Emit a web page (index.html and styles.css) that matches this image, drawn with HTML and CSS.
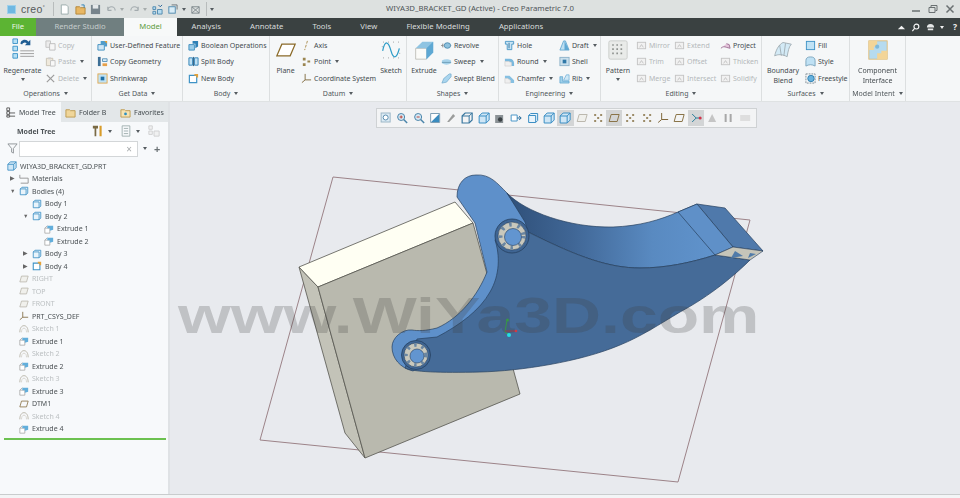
FILE: index.html
```html
<!DOCTYPE html>
<html lang="en">
<head>
<meta charset="utf-8">
<title>WIYA3D_BRACKET_GD (Active) - Creo Parametric 7.0</title>
<link rel="stylesheet" href="styles.css">
</head>
<body>
<svg class="defs" width="0" height="0" aria-hidden="true">
  <defs>
    <symbol id="i-cube" viewBox="0 0 12 12"><path d="M1 4l3-3h7v7l-3 3H1z" fill="#cfe6f5" stroke="#3c8fc4"/><path d="M1 4h7v7M8 4l3-3" fill="none" stroke="#3c8fc4"/></symbol>
    <symbol id="i-body" viewBox="0 0 12 12"><path d="M1.500 3.500l2-2h7v7l-2 2h-7z" fill="#e9f4fb" stroke="#3c8fc4"/><path d="M1.500 3.500h7v7" fill="none" stroke="#3c8fc4"/></symbol>
    <symbol id="i-ext" viewBox="0 0 12 12"><path d="M1 5h6v6H1z" fill="#fff" stroke="#a9a9a9"/><path d="M4 2h7v5l-4 1V5H4z" fill="#62aedb"/><path d="M1 5l3-3" stroke="#a9a9a9"/></symbol>
    <symbol id="i-sketch" viewBox="0 0 12 12"><path d="M1 10c0-5 2-8 5-8s5 3 5 8" fill="none" stroke="#bdb9ad" stroke-width="1.200"/><path d="M3 10c0-3 1-5 3-5s3 2 3 5" fill="none" stroke="#d2d0c9"/></symbol>
    <symbol id="i-plane" viewBox="0 0 12 12"><path d="M3 2.500h8L9 9.500H1z" fill="none" stroke="#8a7448"/></symbol>
    <symbol id="i-plane-off" viewBox="0 0 12 12"><path d="M3 2.500h8L9 9.500H1z" fill="#f0f0ec" stroke="#bcb8ae"/></symbol>
    <symbol id="i-csys" viewBox="0 0 12 12"><path d="M4.500 1v6.500H11M4.500 7.500L1 10.500" fill="none" stroke="#80693d"/></symbol>
    <symbol id="i-copy" viewBox="0 0 12 12"><path d="M1 1h5v7H1z" fill="#ececec" stroke="#c2c2c2"/><path d="M5 4h6v7H5z" fill="#f6f6f6" stroke="#bdbdbd"/></symbol>
    <symbol id="i-paste" viewBox="0 0 12 12"><path d="M1.500 2.500h7v8h-7z" fill="#efe9dc" stroke="#c8c2b4"/><path d="M6 5h5v6H6z" fill="#f8f8f8" stroke="#c2c2c2"/><path d="M3.500 1.500h3v2h-3z" fill="#d0d0d0"/></symbol>
    <symbol id="i-udf" viewBox="0 0 12 12"><path d="M1 5h7v6H1z" fill="#cfe6f5" stroke="#3f8fc0"/><path d="M4 1h7v6H8V5H4z" fill="#4f9ccb"/><path d="M8 1l3 0v3z" fill="#e2a23c"/></symbol>
    <symbol id="i-geom" viewBox="0 0 12 12"><path d="M1 1h3v10H1z" fill="#3d6f96"/><path d="M6 3h5v3H6z" fill="#d9ecf7" stroke="#5a93b8"/><path d="M6 8h5v3H6z" fill="#e6a04a"/></symbol>
    <symbol id="i-shrink" viewBox="0 0 12 12"><rect x="1" y="1" width="10" height="10" fill="#bfe2f5" stroke="#e2a94f"/><rect x="4" y="4" width="4" height="4" fill="#1f6fa5"/></symbol>
    <symbol id="i-bool" viewBox="0 0 12 12"><path d="M1 5h6v6H1z" fill="#9ccde9" stroke="#3f8fc0"/><path d="M5 1h6v6l-3 2V4H5z" fill="#2f81b6"/></symbol>
    <symbol id="i-split" viewBox="0 0 12 12"><path d="M1 2h4v8H1zM7 2h4v8H7z" fill="#bfe0f3" stroke="#2f81b6"/><path d="M6 1v10" stroke="#2f5d80"/></symbol>
    <symbol id="i-new" viewBox="0 0 12 12"><path d="M1.500 2.500h8v8h-8z" fill="#fff" stroke="#3f93c6" stroke-width="1.300"/><path d="M7 1h4v4H9V3H7z" fill="#e5a23a"/></symbol>
    <symbol id="i-revolve" viewBox="0 0 12 12"><path d="M0 6h12" stroke="#999" stroke-dasharray="2 1"/><ellipse cx="7" cy="6" rx="3.500" ry="3" fill="#8fc2de" stroke="#4f8cb0"/><path d="M2 4v4" stroke="#777"/></symbol>
    <symbol id="i-sweep" viewBox="0 0 12 12"><path d="M1 5c3-2 7-2 10 0v3c-3 2-7 2-10 0z" fill="#a6d2ea"/><path d="M1 7h10" stroke="#6d9cb8"/></symbol>
    <symbol id="i-blend" viewBox="0 0 12 12"><path d="M1 11l2-5 6-5h2v3L6 10z" fill="#a9d5ee" stroke="#6ba6ca" stroke-width=".7"/></symbol>
    <symbol id="i-hole" viewBox="0 0 12 12"><path d="M1.500 1.500h9v3h-2v6h-5v-6h-2z" fill="#c7e3f3" stroke="#4a97c6"/><path d="M5.500 3v6" stroke="#2f6f9a"/></symbol>
    <symbol id="i-round" viewBox="0 0 12 12"><path d="M1 3h5c3 0 5 2 5 5v3H8V7L5 6H1z" fill="#79b8dd"/><path d="M1 6h4l3 1v4H1z" fill="#efefef" stroke="#c8c8c8" stroke-width=".6"/></symbol>
    <symbol id="i-chamfer" viewBox="0 0 12 12"><path d="M1 3h5l5 5v3H7V8L4 6H1z" fill="#86c0e2"/><path d="M1 6h3l3 2v3H1z" fill="#efefef" stroke="#c8c8c8" stroke-width=".6"/></symbol>
    <symbol id="i-draft" viewBox="0 0 12 12"><path d="M1 11L5 1h2l4 10z" fill="#bcdff2" stroke="#4f9ccb" stroke-width=".8"/><path d="M6 1v10h5z" fill="#5fa8d3"/></symbol>
    <symbol id="i-shell" viewBox="0 0 12 12"><rect x="1" y="1.500" width="10" height="9" fill="#c9dfec" stroke="#8cb2c9"/><rect x="4" y="4" width="4" height="4" fill="#2f78a8"/></symbol>
    <symbol id="i-rib" viewBox="0 0 12 12"><path d="M1 4h3v5h7v2H1z" fill="#9fd0ea" stroke="#4f9ccb" stroke-width=".7"/><path d="M5 8l3-6h3v6z" fill="#cfe8f6" stroke="#5fa8d3" stroke-width=".7"/></symbol>
    <symbol id="i-style" viewBox="0 0 12 12"><path d="M1 11V5c0-3 2-4 5-4s5 1 5 4v6c-3-2-7-2-10 0z" fill="#bfe1f4" stroke="#7ba4bd"/></symbol>
    <symbol id="i-free" viewBox="0 0 12 12"><rect x="1" y="1" width="10" height="10" fill="none" stroke="#7c8a92" stroke-dasharray="2 1"/><circle cx="6.500" cy="6" r="3.500" fill="#67b2de" stroke="#2f7fb0"/></symbol>
    <symbol id="i-extrude" viewBox="0 0 24 24"><path d="M2 10h13v13H2z" fill="#fbfbf8" stroke="#b9b9b2"/><path d="M2 10l8-8h13v13l-8 8V10z" fill="#8fc4e2"/><path d="M15 10l8-8v13l-8 8z" fill="#5ea8d3"/></symbol>
    <symbol id="i-surface" viewBox="0 0 24 24"><path d="M2 19C4 10 8 5 12 3l10 2c-3 3-4 9-5 15C11 17 6 17 2 19z" fill="#d3eaf6" stroke="#9ba7ad"/><path d="M8 6l2 13M15 4l-2 15" stroke="#9ba7ad" fill="none"/></symbol>
    <symbol id="i-interface" viewBox="0 0 24 24"><rect x="1" y="1" width="22" height="22" fill="#b6dbef" stroke="#e0b76a"/><path d="M1 12h6V8h4V1H1zM11 23v-7h5v-3h7v10z" fill="#f3d598"/><circle cx="11" cy="8" r="2.500" fill="#7fb9da"/></symbol>
    <symbol id="i-regen" viewBox="0 0 24 24"><path d="M1 1h5v5H1zM1 9h5v5H1zM1 17h5v5H1z" fill="#b6e0f5" stroke="#3b93c8"/><path d="M9 6a5 5 0 0 1 9-2l2-2v6h-6l2-2a3 3 0 0 0-5 1z" fill="#1f5d93"/><path d="M9 14h15M9 17h15M9 20h15" stroke="#999"/></symbol>
    <symbol id="i-pattern" viewBox="0 0 24 24"><rect x="1" y="1" width="22" height="22" rx="2" fill="#e9ebe9" stroke="#c6c9c6"/><path d="M5 6h2M10 6h2M15 6h2M5 11h2M10 11h2M15 11h2M5 16h2M10 16h2M15 16h2" stroke="#8f9390" stroke-width="2"/></symbol>
    <symbol id="i-sk" viewBox="0 0 24 24"><path d="M2 13c3-14 7-11 10 0s7 9 10-3" fill="none" stroke="#2d9cc8" stroke-width="1.500"/><path d="M3 2v1M9 2v1M15 2v1M21 2v1M3 21v1M9 21v1M15 21v1M21 21v1M1 8h1M22 16h1" stroke="#888"/></symbol>
    <symbol id="i-bigplane" viewBox="0 0 24 18"><path d="M7 2h16l-6 14H1z" fill="#fff" stroke="#8a6a28" stroke-width="1.500"/></symbol>
    <symbol id="i-grey" viewBox="0 0 12 12"><rect x="1.500" y="2.500" width="9" height="7" fill="#f1f1f1" stroke="#c4c4c4"/><path d="M4 8l2-3 2 3" fill="none" stroke="#c4c4c4"/></symbol>
    <symbol id="i-tbg" viewBox="0 0 12 12"><path d="M2 10l6-8 2 2-6 6z" fill="#9a9c9b"/></symbol>
    <symbol id="i-tbd" viewBox="0 0 12 12"><path d="M2 3h2M8 3h2M5 6h2M2 9h2M8 9h2" stroke="#806a3a" stroke-width="1.500"/></symbol>
    <symbol id="i-refit" viewBox="0 0 12 12"><rect x="1" y="1" width="9" height="9" fill="#dcebf4" stroke="#9db7c8"/><circle cx="5.500" cy="5.500" r="2.500" fill="#fff" stroke="#5d8fb0"/></symbol>
    <symbol id="i-zi" viewBox="0 0 12 12"><circle cx="5" cy="5" r="3.500" fill="#d5e9f5" stroke="#4d86ab"/><path d="M7.500 7.500L11 11" stroke="#4d86ab" stroke-width="1.500"/><path d="M3.500 5h3M5 3.500v3" stroke="#c0453a"/></symbol>
    <symbol id="i-zo" viewBox="0 0 12 12"><circle cx="5" cy="5" r="3.500" fill="#d5e9f5" stroke="#4d86ab"/><path d="M7.500 7.500L11 11" stroke="#4d86ab" stroke-width="1.500"/><path d="M3.500 5h3" stroke="#c0453a"/></symbol>
    <symbol id="i-repaint" viewBox="0 0 12 12"><path d="M1.500 1.500h9v9h-9z" fill="#fff" stroke="#7f9fb5"/><path d="M10 2v8H2z" fill="#3a8cbf"/></symbol>
    <symbol id="i-wire" viewBox="0 0 12 12"><path d="M1 4l3-3h7v7l-3 3H1z" fill="none" stroke="#39779f" stroke-width="1.200"/><path d="M1 4h7v7M8 4l3-3" fill="none" stroke="#39779f"/></symbol>
    <symbol id="i-cam" viewBox="0 0 12 12"><path d="M1 3h8v8H1z" fill="#8b9296"/><circle cx="6" cy="7.500" r="2.200" fill="#3a4144"/></symbol>
    <symbol id="i-sec" viewBox="0 0 12 12"><path d="M1 3h6v6H1z" fill="#fff" stroke="#4d98c9"/><path d="M7 6h4M9 4l2 2-2 2" fill="none" stroke="#2b6e9d"/></symbol>
  </defs>
</svg>

<header class="titlebar">
  <div class="logo"><span class="logo-mark"></span><span class="logo-text">creo<sup>°</sup></span></div>
  <div class="quick">
    <svg class="qi" viewBox="0 0 12 12"><path d="M2.500 1H8l2 2v8H2.500z" fill="#fff" stroke="#9aa"/></svg>
    <svg class="qi" viewBox="0 0 12 12"><path d="M1 3h4l1 1h5v7H1z" fill="#e8b763" stroke="#b38537"/><path d="M7 1h3v3" fill="none" stroke="#2a7fb5"/></svg>
    <svg class="qi" viewBox="0 0 12 12"><path d="M1 1h10v10H1z" fill="#77848c"/><path d="M3 1h6v4H3z" fill="#e4e8ea"/></svg>
    <svg class="qi dim" viewBox="0 0 12 12"><path d="M2 7a4 4 0 0 1 8 0M2 7V3M2 7h4" fill="none" stroke="#7f8a90" stroke-width="1.300"/></svg>
    <span class="caret dim"></span>
    <svg class="qi dim" viewBox="0 0 12 12"><path d="M10 7a4 4 0 0 0-8 0M10 7V3M10 7H6" fill="none" stroke="#7f8a90" stroke-width="1.300"/></svg>
    <span class="caret dim"></span>
    <svg class="qi" viewBox="0 0 12 12"><path d="M1 3h3v3H1zM1 8h3v3H1zM6 6h5v5H6z" fill="#b6dcf1" stroke="#4e88ad"/><path d="M7 1l2 2 2-2" fill="none" stroke="#1f5d93"/></svg>
    <svg class="qi" viewBox="0 0 12 12"><rect x="2" y="3" width="7" height="7" fill="#d8ecf7" stroke="#4e88ad"/><path d="M5 1h6v5" fill="none" stroke="#6b7478"/></svg>
    <span class="caret"></span>
    <svg class="qi" viewBox="0 0 12 12"><path d="M2 3h8v7H2zM2 3l8 7M10 3l-8 7" fill="none" stroke="#7d878b"/></svg>
    <span class="sep"></span>
    <span class="caret"></span>
  </div>
  <div class="title">WIYA3D_BRACKET_GD (Active) - Creo Parametric 7.0</div>
  <div class="winctl">
    <svg class="wc" viewBox="0 0 10 10"><path d="M1 7h8" stroke="#6a7072" stroke-width="1.500"/></svg>
    <svg class="wc" viewBox="0 0 10 10"><path d="M1 3.500h6v5H1zM3 3V1.500h6v5H7.500" fill="none" stroke="#6a7072"/></svg>
    <svg class="wc" viewBox="0 0 10 10"><path d="M1.500 1.500l7 7M8.500 1.500l-7 7" stroke="#6a7072" stroke-width="1.500"/></svg>
  </div>
</header>

<nav class="tabs">
  <span class="tab tab-file">File</span>
  <span class="tab tab-render">Render Studio</span>
  <span class="tab tab-active">Model</span>
  <span class="tab">Analysis</span>
  <span class="tab">Annotate</span>
  <span class="tab">Tools</span>
  <span class="tab">View</span>
  <span class="tab">Flexible Modeling</span>
  <span class="tab">Applications</span>
  <div class="tab-tools">
    <svg class="ti" viewBox="0 0 10 10"><path d="M1 7l4-4 4 4z" fill="#f3f3f3"/></svg>
    <svg class="ti" viewBox="0 0 10 10"><circle cx="6" cy="4" r="2.700" fill="none" stroke="#f3f3f3" stroke-width="1.300"/><path d="M4 6L1.500 9" stroke="#f3f3f3" stroke-width="1.300"/></svg>
    <svg class="ti" viewBox="0 0 10 10"><path d="M1 5a4 4 0 0 1 8 0zM2 6h6v2H2z" fill="#e6e8e8"/></svg>
    <span class="caret light"></span>
    <span class="help">?</span>
  </div>
</nav>

<section class="ribbon">
  <div class="group g-ops">
    <div class="gbody">
      <div class="big regen"><svg class="ic-big"><use href="#i-regen"/></svg><span>Regenerate</span><span class="caret"></span></div>
      <div class="col off">
        <div class="row"><svg class="ic12"><use href="#i-copy"/></svg>Copy</div>
        <div class="row"><svg class="ic12"><use href="#i-paste"/></svg>Paste<span class="caret"></span></div>
        <div class="row"><svg class="ic12" viewBox="0 0 12 12"><path d="M2 2l8 8M10 2l-8 8" stroke="#9c9c9c" stroke-width="1.300"/></svg>Delete<span class="caret"></span></div>
      </div>
    </div>
    <div class="glabel">Operations<span class="caret"></span></div>
  </div>
  <div class="group g-data">
    <div class="gbody">
      <div class="col">
        <div class="row"><svg class="ic12"><use href="#i-udf"/></svg>User-Defined Feature</div>
        <div class="row"><svg class="ic12"><use href="#i-geom"/></svg>Copy Geometry</div>
        <div class="row"><svg class="ic12"><use href="#i-shrink"/></svg>Shrinkwrap</div>
      </div>
    </div>
    <div class="glabel">Get Data<span class="caret"></span></div>
  </div>
  <div class="group g-body">
    <div class="gbody">
      <div class="col">
        <div class="row"><svg class="ic12"><use href="#i-bool"/></svg>Boolean Operations</div>
        <div class="row"><svg class="ic12"><use href="#i-split"/></svg>Split Body</div>
        <div class="row"><svg class="ic12"><use href="#i-new"/></svg>New Body</div>
      </div>
    </div>
    <div class="glabel">Body<span class="caret"></span></div>
  </div>
  <div class="group g-datum">
    <div class="gbody">
      <div class="big plane"><svg class="ic-big"><use href="#i-bigplane"/></svg><span>Plane</span></div>
      <div class="col">
        <div class="row"><svg class="ic12" viewBox="0 0 12 12"><path d="M7 1L4 11" stroke="#a98b4a" stroke-dasharray="3 1.500"/></svg>Axis</div>
        <div class="row"><svg class="ic12" viewBox="0 0 12 12"><path d="M2 2h3v3H2zM2 8h3v3H2zM7 5h3v2H7z" fill="#9a8550"/></svg>Point<span class="caret"></span></div>
        <div class="row"><svg class="ic12"><use href="#i-csys"/></svg>Coordinate System</div>
      </div>
      <div class="big sketch"><svg class="ic-big"><use href="#i-sk"/></svg><span>Sketch</span></div>
    </div>
    <div class="glabel">Datum<span class="caret"></span></div>
  </div>
  <div class="group g-shapes">
    <div class="gbody">
      <div class="big extrude"><svg class="ic-big"><use href="#i-extrude"/></svg><span>Extrude</span></div>
      <div class="col">
        <div class="row"><svg class="ic12"><use href="#i-revolve"/></svg>Revolve</div>
        <div class="row"><svg class="ic12"><use href="#i-sweep"/></svg>Sweep<span class="caret"></span></div>
        <div class="row"><svg class="ic12"><use href="#i-blend"/></svg>Swept Blend</div>
      </div>
    </div>
    <div class="glabel">Shapes<span class="caret"></span></div>
  </div>
  <div class="group g-eng">
    <div class="gbody">
      <div class="col eng-a">
        <div class="row"><svg class="ic12"><use href="#i-hole"/></svg>Hole</div>
        <div class="row"><svg class="ic12"><use href="#i-round"/></svg>Round<span class="caret"></span></div>
        <div class="row"><svg class="ic12"><use href="#i-chamfer"/></svg>Chamfer<span class="caret"></span></div>
      </div>
      <div class="col">
        <div class="row"><svg class="ic12"><use href="#i-draft"/></svg>Draft<span class="caret"></span></div>
        <div class="row"><svg class="ic12"><use href="#i-shell"/></svg>Shell</div>
        <div class="row"><svg class="ic12"><use href="#i-rib"/></svg>Rib<span class="caret"></span></div>
      </div>
    </div>
    <div class="glabel">Engineering<span class="caret"></span></div>
  </div>
  <div class="group g-edit">
    <div class="gbody">
      <div class="big pattern"><svg class="ic-big"><use href="#i-pattern"/></svg><span>Pattern</span><span class="caret"></span></div>
      <div class="col off edit-a">
        <div class="row"><svg class="ic12"><use href="#i-grey"/></svg>Mirror</div>
        <div class="row"><svg class="ic12"><use href="#i-grey"/></svg>Trim</div>
        <div class="row"><svg class="ic12"><use href="#i-grey"/></svg>Merge</div>
      </div>
      <div class="col off edit-b">
        <div class="row"><svg class="ic12"><use href="#i-grey"/></svg>Extend</div>
        <div class="row"><svg class="ic12"><use href="#i-grey"/></svg>Offset</div>
        <div class="row"><svg class="ic12"><use href="#i-grey"/></svg>Intersect</div>
      </div>
      <div class="col">
        <div class="row"><svg class="ic12" viewBox="0 0 12 12"><path d="M1 9c2-2 4-2 6-1l4 1-1-4-3-1" fill="#e5c6dc" stroke="#9c6f94"/></svg>Project</div>
        <div class="row off"><svg class="ic12"><use href="#i-grey"/></svg>Thicken</div>
        <div class="row off"><svg class="ic12"><use href="#i-grey"/></svg>Solidify</div>
      </div>
    </div>
    <div class="glabel">Editing<span class="caret"></span></div>
  </div>
  <div class="group g-surf">
    <div class="gbody">
      <div class="big boundary"><svg class="ic-big"><use href="#i-surface"/></svg><span>Boundary<br>Blend</span></div>
      <div class="col">
        <div class="row"><svg class="ic12" viewBox="0 0 12 12"><rect x="1.500" y="1.500" width="9" height="9" fill="#bfe2f5" stroke="#3f93c6"/></svg>Fill</div>
        <div class="row"><svg class="ic12"><use href="#i-style"/></svg>Style</div>
        <div class="row"><svg class="ic12"><use href="#i-free"/></svg>Freestyle</div>
      </div>
    </div>
    <div class="glabel">Surfaces<span class="caret"></span></div>
  </div>
  <div class="group g-intent">
    <div class="gbody">
      <div class="big iface"><svg class="ic-big"><use href="#i-interface"/></svg><span>Component<br>Interface</span></div>
    </div>
    <div class="glabel">Model Intent<span class="caret"></span></div>
  </div>
</section>

<main class="work">
  <aside class="side">
    <div class="stabs">
      <div class="stab stab-on"><svg class="ic12" viewBox="0 0 12 12"><path d="M2 1h3v3H2zM2 5h3v3H2zM2 9h3v2H2zM5 6.500h6M5 10h6" fill="none" stroke="#555"/></svg>Model Tree</div>
      <div class="stab stab-folder"><svg class="ic12" viewBox="0 0 12 12"><path d="M1 3h4l1 1h5v7H1z" fill="#f0d69a" stroke="#bd9a50"/></svg><span>Folder B</span></div>
      <div class="stab stab-fav"><svg class="ic12" viewBox="0 0 12 12"><path d="M1 3h4l1 1h5v7H1z" fill="#f6e3b3" stroke="#bd9a50"/><circle cx="6" cy="7.500" r="1.500" fill="#2b8fc0"/></svg><span>Favorites</span></div>
    </div>
    <div class="mt-head">
      <b>Model Tree</b>
      <span class="mt-tools">
        <svg class="ic14" viewBox="0 0 14 14"><path d="M1 1h6v3H5v9H3V4H1z" fill="#7a6a44"/><path d="M10 1v6M10 7v6" stroke="#d89c2a" stroke-width="2.500"/></svg><span class="caret"></span>
        <svg class="ic14" viewBox="0 0 14 14"><path d="M2.500 1h9v12h-9zM4.500 4h5M4.500 7h5M4.500 10h5" fill="none" stroke="#9aa"/></svg><span class="caret"></span>
        <svg class="ic14 mt-last" viewBox="0 0 14 14"><path d="M1 1h4v4H1zM1 7h4v4H1zM7 7h6v6H7z" fill="#eee" stroke="#bbb"/></svg>
      </span>
    </div>
    <div class="mt-filter">
      <svg class="ic12 funnel" viewBox="0 0 12 12"><path d="M1 1h10L7 6v5L5 10V6z" fill="none" stroke="#8d9396"/></svg>
      <div class="search"><span>×</span></div>
      <span class="caret"></span>
      <span class="plus">+</span>
    </div>
    <ul class="tree">
      <li class="l0"><svg class="ic10"><use href="#i-cube"/></svg>WIYA3D_BRACKET_GD.PRT</li>
      <li class="l1"><i class="arr">▶</i><svg class="ic10" viewBox="0 0 12 12"><path d="M1 1v4M1 5h10v6H2" fill="none" stroke="#8a8a8a"/></svg>Materials</li>
      <li class="l1"><i class="arr">▼</i><svg class="ic10"><use href="#i-body"/></svg>Bodies (4)</li>
      <li class="l2 noarr"><svg class="ic10"><use href="#i-body"/></svg>Body 1</li>
      <li class="l2"><i class="arr">▼</i><svg class="ic10"><use href="#i-body"/></svg>Body 2</li>
      <li class="l3"><svg class="ic10"><use href="#i-ext"/></svg>Extrude 1</li>
      <li class="l3"><svg class="ic10"><use href="#i-ext"/></svg>Extrude 2</li>
      <li class="l2"><i class="arr">▶</i><svg class="ic10"><use href="#i-body"/></svg>Body 3</li>
      <li class="l2"><i class="arr">▶</i><svg class="ic10"><use href="#i-new"/></svg>Body 4</li>
      <li class="l1 noarr dimmed"><svg class="ic10"><use href="#i-plane-off"/></svg>RIGHT</li>
      <li class="l1 noarr dimmed"><svg class="ic10"><use href="#i-plane-off"/></svg>TOP</li>
      <li class="l1 noarr dimmed"><svg class="ic10"><use href="#i-plane-off"/></svg>FRONT</li>
      <li class="l1 noarr"><svg class="ic10"><use href="#i-csys"/></svg>PRT_CSYS_DEF</li>
      <li class="l1 noarr dimmed"><svg class="ic10"><use href="#i-sketch"/></svg>Sketch 1</li>
      <li class="l1 noarr"><svg class="ic10"><use href="#i-ext"/></svg>Extrude 1</li>
      <li class="l1 noarr dimmed"><svg class="ic10"><use href="#i-sketch"/></svg>Sketch 2</li>
      <li class="l1 noarr"><svg class="ic10"><use href="#i-ext"/></svg>Extrude 2</li>
      <li class="l1 noarr dimmed"><svg class="ic10"><use href="#i-sketch"/></svg>Sketch 3</li>
      <li class="l1 noarr"><svg class="ic10"><use href="#i-ext"/></svg>Extrude 3</li>
      <li class="l1 noarr"><svg class="ic10"><use href="#i-plane"/></svg>DTM1</li>
      <li class="l1 noarr dimmed"><svg class="ic10"><use href="#i-sketch"/></svg>Sketch 4</li>
      <li class="l1 noarr"><svg class="ic10"><use href="#i-ext"/></svg>Extrude 4</li>
    </ul>
    <div class="insert"></div>
  </aside>

  <div class="canvas">
    <!-- drawing coordinates are page coordinates: the viewBox starts where the canvas starts -->
    <svg class="scene" viewBox="170 102 790 392" xmlns="http://www.w3.org/2000/svg">
      <defs>
        <linearGradient id="top-grad" x1="0" x2="1" y1="0" y2="0">
          <stop offset="0" stop-color="#2f5079"/><stop offset=".3" stop-color="#3f6594"/><stop offset=".7" stop-color="#598ac1"/><stop offset="1" stop-color="#6093cc"/>
        </linearGradient>
      </defs>
      <path d="M333 177L750 220 678 482 260 440z" fill="none" stroke="#9c8388" stroke-width="1"/>
      <path d="M299 267L318 287 365 458 345 433z" fill="#c3c3b8" stroke="#56564f" stroke-width=".8"/>
      <path d="M299 267L455 202 473 223 318 287z" fill="#fffff3" stroke="#56564f" stroke-width=".8"/>
      <path d="M318 287L473 223 520 394 365 458z" fill="#b9b9ae" stroke="#56564f" stroke-width=".8"/>

      <!-- light boss side, concave wall and lower cylinder -->
      <path d="M457 197C457 183 465 175 476 175 490 174 497 183 507 193L528 224 515 300 445 352 413 371C400 368 392 358 392 347 392 338 402 329 412 330 418 331 425 331 437 328 460 318 478 295 487 272L475 223z" fill="#5e90ca" stroke="#26405f" stroke-width=".7"/>
      <!-- curved top wall -->
      <path d="M507 193C525 212 570 228 613 227 640 226 660 220 678 212L697 204 715 255C690 263 665 268 640 268 610 268 580 258 528 232L525 222z" fill="url(#top-grad)" stroke="#26405f" stroke-width=".7"/>
      <!-- front face -->
      <path d="M495 240C500 255 500 275 490 292 480 310 460 325 437 337L417 339 405 368C413 372 440 373 480 372 520 371 580 362 620 345 640 337 660 324 680 312 710 296 735 275 750 260L715 255C690 263 665 268 640 268 610 268 580 258 528 232L512 220z" fill="#456b98" stroke="#26405f" stroke-width=".7"/>
      <!-- end facets -->
      <path d="M697 204L725 208 763 251 733 247z" fill="#4f79ab" stroke="#26405f" stroke-width=".7"/>
      <path d="M678 212L697 204 733 247 715 255z" fill="#5f90c8" stroke="#26405f" stroke-width=".7"/>
      <path d="M715 255L733 247 763 251 750 260z" fill="#c6c5b9" stroke="#26405f" stroke-width=".6"/>
      <path d="M735 251L743 256 731 258z" fill="#517ba9"/>
      <path d="M750 253L756 254 748 258z" fill="#517ba9"/>
      <!-- upper hole -->
      <circle cx="512" cy="236" r="17" fill="#3f6593" stroke="#26405f" stroke-width=".8"/>
      <circle cx="512" cy="236" r="14" fill="#c9c8bc" stroke="#26405f" stroke-width=".6"/>
      <circle cx="512" cy="236" r="11.500" fill="none" stroke="#6a86a2" stroke-width="4" stroke-dasharray="2.500 6"/>
      <circle cx="513" cy="237" r="8.500" fill="#6295d0" stroke="#26405f" stroke-width=".6"/>
      <!-- lower hole -->
      <circle cx="416" cy="355" r="14.500" fill="#3f6593" stroke="#26405f" stroke-width=".8"/>
      <circle cx="416" cy="355" r="12" fill="#c9c8bc" stroke="#26405f" stroke-width=".6"/>
      <circle cx="416" cy="355" r="10" fill="none" stroke="#6a86a2" stroke-width="3.500" stroke-dasharray="2.500 5"/>
      <circle cx="417" cy="356" r="7" fill="#6295d0" stroke="#26405f" stroke-width=".6"/>
      <!-- triad -->
      <path d="M507 320L505 332 509 335" fill="none" stroke="#37b24a" stroke-width="1"/>
      <path d="M505 331L516 331" stroke="#c23a45" stroke-width="1"/>
      <circle cx="507.500" cy="320" r="1.500" fill="#37b24a"/>
      <circle cx="516" cy="331" r="1.300" fill="#d23a45"/>
      <circle cx="509" cy="335" r="2" fill="#23e0e6"/>
      <text class="mark" x="131" y="333" transform="scale(1.358 1)">www.WiYa3D.com</text>
    </svg>
    <div class="viewbar">
      <svg class="vi"><use href="#i-refit"/></svg>
      <svg class="vi"><use href="#i-zi"/></svg>
      <svg class="vi"><use href="#i-zo"/></svg>
      <svg class="vi"><use href="#i-repaint"/></svg>
      <svg class="vi"><use href="#i-tbg"/></svg>
      <svg class="vi"><use href="#i-wire"/></svg>
      <svg class="vi"><use href="#i-cube"/></svg>
      <svg class="vi"><use href="#i-cam"/></svg>
      <svg class="vi"><use href="#i-sec"/></svg>
      <svg class="vi"><use href="#i-body"/></svg>
      <svg class="vi"><use href="#i-cube"/></svg>
      <svg class="vi vi-on"><use href="#i-cube"/></svg>
      <svg class="vi"><use href="#i-plane-off"/></svg>
      <svg class="vi"><use href="#i-tbd"/></svg>
      <svg class="vi vi-on"><use href="#i-plane"/></svg>
      <svg class="vi"><use href="#i-tbd"/></svg>
      <svg class="vi"><use href="#i-tbd"/></svg>
      <svg class="vi"><use href="#i-csys"/></svg>
      <svg class="vi"><use href="#i-plane"/></svg>
      <svg class="vi vi-on" viewBox="0 0 12 12"><path d="M2 2l4 4-4 4M6 6h5" fill="none" stroke="#2c7f9b"/><circle cx="10" cy="6" r="1.500" fill="#d3344a"/></svg>
      <svg class="vi" viewBox="0 0 12 12"><path d="M6 2l4 8H2z" fill="#c5c5c5"/></svg>
      <svg class="vi" viewBox="0 0 12 12"><path d="M3.500 2v8M8.500 2v8" stroke="#a8a8a8" stroke-width="2"/></svg>
      <svg class="vi" viewBox="0 0 12 12"><path d="M1 3h10v6H1z" fill="#dedede"/></svg>
    </div>
  </div>
</main>
<footer class="status"></footer>
</body>
</html>
```

FILE: styles.css
```css
* { box-sizing: border-box; }
html, body { margin: 0; height: 100%; }
body {
  width: 960px; height: 498px; overflow: hidden;
  font: 7px/1 "Noto Sans", "Open Sans", sans-serif;
  color: #444b4f; background: #eef0f2;
  display: flex; flex-direction: column;
  filter: blur(.35px);
}
.defs { position: absolute; }
svg { display: block; flex: none; }
.caret { display: inline-block; width: 0; height: 0; margin-left: 4px; border: 2.500px solid transparent; border-top: 3px solid #555c60; border-bottom: 0; flex: none; }
.caret.dim { opacity: .4; }
.caret.light { border-top-color: #f2f2f2; }

/* title bar */
.titlebar { height: 18px; background: #dde1e0; display: flex; align-items: center; position: relative; flex: none; }
.logo { display: flex; align-items: center; width: 53px; padding-left: 7px; }
.logo-mark { width: 9px; height: 9px; background: #6fb8e2; border: 1px solid #9fd0ea; margin-right: 5px; }
.logo-text { font: 10.500px "Liberation Sans", sans-serif; color: #55595b; letter-spacing: .3px; }
.logo-text sup { font-size: 5px; }
.quick { display: flex; align-items: center; gap: 4.500px; border-left: 1px solid #b8bcbc; height: 14px; padding-left: 5px; }
.qi { width: 11px; height: 11px; }
.qi.dim { opacity: .6; }
.quick .caret { margin-left: -1px; }
.sep { width: 1px; height: 14px; background: #b8bcbc; }
.title { position: absolute; left: 0; right: 0; text-align: center; font-size: 7.800px; color: #4f5558; pointer-events: none; }
.winctl { margin-left: auto; display: flex; gap: 7px; padding-right: 5px; }
.wc { width: 10px; height: 10px; }

/* tabs */
.tabs { height: 18px; background: #3a4141; display: flex; align-items: stretch; flex: none; }
.tab { display: flex; align-items: center; padding: 0 14.600px; color: #d9dddd; font-size: 7.700px; }
.tab-file { background: #5cb433; color: #eef5e6; width: 36px; padding: 0; justify-content: center; }
.tab-render { background: #707f80; color: #c4cccc; width: 88px; padding: 0; justify-content: center; }
.tab-active { background: #f7f9f9; color: #5e9c40; width: 53px; padding: 0; justify-content: center; }
.tab-tools { margin-left: auto; display: flex; align-items: center; gap: 5.500px; padding-right: 3px; }
.tab-tools .caret { margin: 0; }
.ti { width: 9px; height: 9px; }
.help { color: #f0f0f0; font-weight: 700; font-size: 8.500px; margin-left: 3px; }

/* ribbon */
.ribbon { height: 66px; background: #f5f7f8; display: flex; flex: none; border-bottom: 1px solid #dfe2e3; }
.group { display: flex; flex-direction: column; border-right: 1px solid #dcdfe0; flex: none; }
.g-ops { width: 92px; } .g-data { width: 91px; } .g-body { width: 87px; } .g-datum { width: 137px; }
.g-shapes { width: 92px; } .g-eng { width: 102px; } .g-edit { width: 161px; } .g-surf { width: 88px; } .g-intent { width: 56px; }
.gbody { flex: 1; display: flex; }
.glabel { height: 15px; display: flex; align-items: center; justify-content: center; color: #51585c; white-space: nowrap; }
.col { display: flex; flex-direction: column; padding-top: 1px; }
.row { height: 16.500px; display: flex; align-items: center; white-space: nowrap; }
.row svg { margin-right: 2px; }
.off, .off .row, .row.off { color: #b4b8ba; }
.big { display: flex; flex-direction: column; align-items: center; text-align: center; line-height: 10px; padding-top: 4px; white-space: nowrap; }
.big svg { margin-bottom: 6px; }
.big .caret { margin: 2px 0 0; }
.ic-big { width: 20px; height: 20px; }
.ic12 { width: 11px; height: 11px; }
.ic14 { width: 12px; height: 12px; }
.ic10 { width: 10px; height: 10px; }
.regen { width: 45px; padding-top: 2px; }
.regen svg { height: 22px; width: 22px; }
.g-data .col, .g-body .col { padding-left: 5px; }
.plane { width: 31px; }
.g-datum .col { width: 77px; }
.sketch { width: 26px; }
.extrude { width: 34px; }
.eng-a { width: 60px; padding-left: 5px; }
.pattern { width: 34px; }
.edit-a { width: 39px; padding-left: 1px; }
.edit-b { width: 46px; }
.boundary { width: 42px; }
.g-surf .col { padding-left: 1px; }
.iface { width: 55px; }

/* main */
.work { flex: 1; display: flex; min-height: 0; }
.side { width: 170px; background: #f7f9fb; border-right: 2px solid #dfe2e5; flex: none; display: flex; flex-direction: column; }
.stabs { display: flex; height: 20px; background: #e3e7e9; }
.stab { display: flex; align-items: center; gap: 3px; white-space: nowrap; }
.stab-on { width: 61px; background: #f7f9fb; padding-left: 5px; }
.stab-folder { width: 57px; padding-left: 4px; overflow: hidden; }
.stab-fav { padding-left: 2px; }
.mt-head { height: 18px; display: flex; align-items: center; padding: 0 8px 0 17px; }
.mt-head b { color: #4e5457; }
.mt-tools { margin-left: auto; display: flex; align-items: center; gap: 4px; }
.mt-tools .caret { margin: 0 4px 0 0; }
.mt-last { opacity: .7; }
.mt-filter { height: 17px; display: flex; align-items: center; padding-left: 7px; }
.funnel { margin-right: 1px; }
.search { width: 119px; height: 16px; background: #fff; border: 1px solid #d3d6d8; display: flex; align-items: center; justify-content: flex-end; padding-right: 5px; color: #a7abad; font-size: 10px; }
.mt-filter .caret { margin-left: 5px; }
.plus { margin-left: 7px; font-size: 11px; color: #6b7275; font-weight: 700; }
.tree { list-style: none; margin: 3px 0 0; padding: 0; }
.tree li { height: 12.500px; display: flex; align-items: center; white-space: nowrap; position: relative; color: #4b5154; }
.tree svg { margin-right: 3px; }
.l0 { padding-left: 7px; }
.l1 { padding-left: 19px; }
.l2 { padding-left: 32px; }
.l3 { padding-left: 44px; }
.arr { position: absolute; margin-left: -9px; font-style: normal; font-size: 5.500px; color: #666; }
.dimmed { color: #bcc0c2 !important; }
.insert { height: 2px; margin: 3px 2px 0 4px; background: #6cc150; flex: none; }

/* canvas */
.canvas { flex: 1; position: relative; background: #e8eaee; min-width: 0; }
.scene { position: absolute; inset: 0; width: 100%; height: 100%; }
.mark { font: 700 50px "Liberation Sans", sans-serif; fill: rgba(60,60,60,.23); }
.viewbar { position: absolute; left: 206px; top: 6px; width: 381px; height: 20px; background: #f3f4f5; border: 1px solid #cfd2d4; display: flex; align-items: center; padding-left: 1px; }
.vi { width: 16.300px; height: 16px; padding: 2px; }
.vi-on { background: #d3d5d6; }

.status { height: 4px; flex: none; background: #f3f5f6; border-top: 1px solid #c9cccd; }
```
